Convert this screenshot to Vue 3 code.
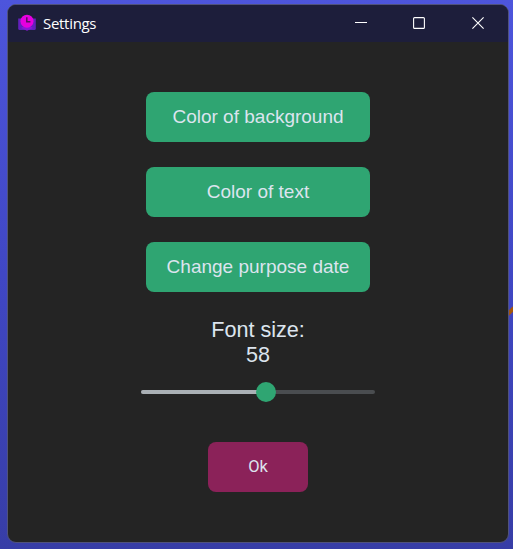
<script setup>
import { ref } from 'vue'

const actions = ['Color of background', 'Color of text', 'Change purpose date']
const fontSize = ref(58)
const min = 5
const max = 105
const fill = () => ((fontSize.value - min) / (max - min)) * 100
</script>

<template>
  <div class="desktop">
    <svg class="streak" width="6" height="14" viewBox="0 0 6 14"><path d="M-1 11L7 3" stroke="#a5560a" stroke-width="4" /></svg>
    <section class="window">
      <header class="titlebar">
        <svg class="logo" width="20" height="20" viewBox="0 0 20 20">
          <path d="M1.2 4.5H18.8V14.5Q18.8 16 17.3 16H2.7Q1.2 16 1.2 14.5Z" fill="#6420bd" />
          <path d="M4 14L10 10L16 14L10 16.8Z" fill="#8b16d8" />
          <circle cx="10" cy="7.2" r="6.5" fill="#e600df" />
          <path d="M9.8 3.2V7.8H13.4" fill="none" stroke="#581060" stroke-width="1.5" />
        </svg>
        <h1>Settings</h1>
        <nav class="controls">
          <button aria-label="Minimize"><svg width="12" height="12" viewBox="0 0 12 12"><path d="M0 5.5H12" /></svg></button>
          <button aria-label="Maximize"><svg width="12" height="12" viewBox="0 0 12 12"><rect x=".6" y=".6" width="10.8" height="10.8" rx="1" /></svg></button>
          <button aria-label="Close" class="close"><svg width="12" height="12" viewBox="0 0 12 12"><path d="M.4 .4L11.6 11.6M11.6 .4L.4 11.6" /></svg></button>
        </nav>
      </header>
      <main>
        <button v-for="a in actions" :key="a" class="action">{{ a }}</button>
        <div class="label">Font size:<br />{{ fontSize }}</div>
        <div class="slider">
          <div class="filled" :style="{ width: fill() + '%' }"></div>
          <div class="thumb" :style="{ left: fill() + '%' }"></div>
        </div>
        <button class="ok">Ok</button>
      </main>
    </section>
  </div>
</template>

<style>
body { margin: 0; }
</style>

<style scoped>
.desktop {
  position: relative;
  box-sizing: border-box;
  width: 513px;
  height: 549px;
  padding: 4px 4px 6px 7px;
  overflow: hidden;
  background: linear-gradient(#4d55dc, #4047c4 50%, #373da6);
}
.streak { position: absolute; right: 0; top: 305px; }
.window {
  position: relative;
  box-sizing: border-box;
  height: 539px;
  border: 1px solid #50527c;
  border-radius: 9px;
  overflow: hidden;
  background: #242424;
}
.titlebar {
  display: flex;
  align-items: center;
  height: 37px;
  padding-left: 9px;
  background: #1d1e3b;
}
h1 {
  flex: 1;
  margin: -2px 0 0 6px;
  font: 400 15px/20px "Open Sans", "Noto Sans", sans-serif;
  letter-spacing: -0.3px;
  color: #fff;
}
button { border: 0; padding: 0; }
.controls { display: flex; margin: -1px 0 0 0; }
.controls button {
  display: flex;
  align-items: center;
  justify-content: center;
  width: 58px;
  height: 35px;
  background: none;
}
.controls .close { width: 60px; }
.controls svg { fill: none; stroke: #fff; stroke-width: 1.1; }
main {
  display: flex;
  flex-direction: column;
  align-items: center;
  padding-top: 50px;
}
.action {
  width: 224px;
  height: 50px;
  margin-bottom: 25px;
  border-radius: 8px;
  background: #2fa572;
  color: #dce4ee;
  font: 19px "Liberation Sans", sans-serif;
}
.label {
  text-align: center;
  color: #dce4ee;
  font: 21.6px/25px "Liberation Sans", sans-serif;
}
.slider {
  position: relative;
  width: 234px;
  height: 4px;
  margin-top: 23px;
  border-radius: 2px;
  background: #4a4d50;
}
.filled { height: 4px; border-radius: 2px 0 0 2px; background: #aab0b5; }
.thumb {
  position: absolute;
  top: -8px;
  width: 20px;
  height: 20px;
  margin-left: -9px;
  border-radius: 50%;
  background: #2fa572;
}
.ok {
  width: 100px;
  height: 50px;
  margin-top: 48px;
  padding-bottom: 2px;
  border-radius: 8px;
  background: #8b2259;
  color: #dce4ee;
  font: 16.5px Roboto, sans-serif;
}
</style>
